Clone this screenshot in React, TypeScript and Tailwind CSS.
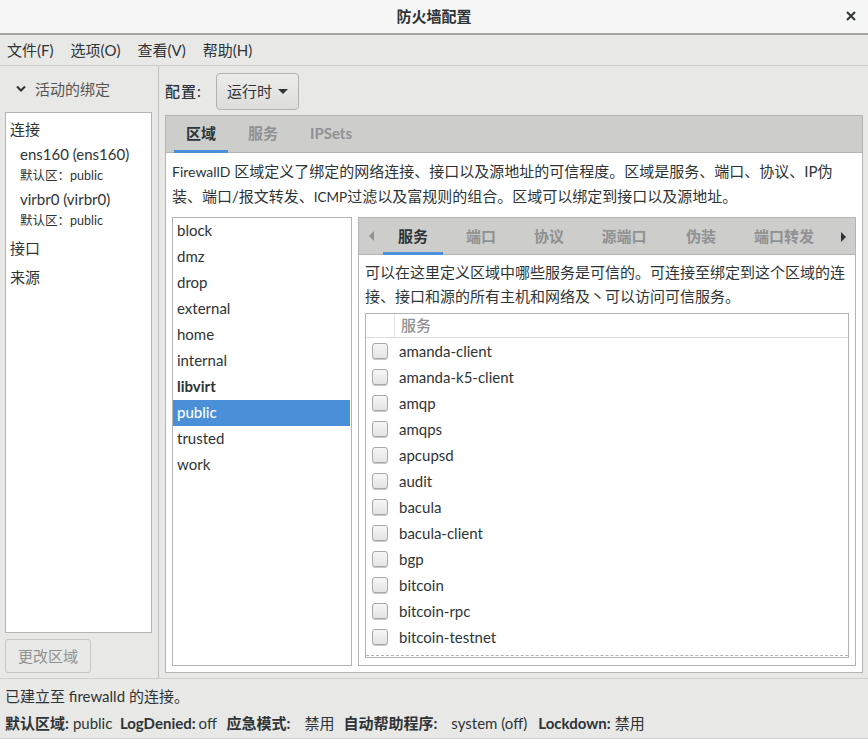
const font = { fontFamily: 'Lato,"Noto Sans CJK SC",sans-serif' };
const zones = ["block", "dmz", "drop", "external", "home", "internal", "libvirt", "public", "trusted", "work"];
const services = ["amanda-client", "amanda-k5-client", "amqp", "amqps", "apcupsd", "audit", "bacula", "bacula-client", "bgp", "bitcoin", "bitcoin-rpc", "bitcoin-testnet"];
const innerTabs = [
  ["服务", "w-[60px] ml-[8px]"],
  ["端口", "w-[60px] ml-[8px]"],
  ["协议", "w-[60px] ml-[8px]"],
  ["源端口", "w-[74px] ml-[8px]"],
  ["伪装", "w-[60px] ml-[10px]"],
  ["端口转发", "w-[88px] ml-[9px]"],
];

function Checkbox() {
  return <span className="block w-[16px] h-[16px] rounded-[3px] border border-[#a8a8a8] bg-gradient-to-b from-[#f6f6f6] to-[#e4e4e4] shadow-[0_1px_0_#c8c8c8]" />;
}

export default function App() {
  return (
    <div style={font} className="w-[868px] h-[739px] overflow-hidden flex flex-col bg-[#e8e8e7] text-[15px] text-[#2e3436]">
      <div className="h-[35px] shrink-0 relative flex items-center justify-center bg-[#f6f6f6] border-b-2 border-[#a3a3a3]">
        <span className="font-bold text-[15px]">防火墙配置</span>
        <svg className="absolute right-[12px] top-[11px]" width="10" height="10" viewBox="0 0 10 10"><path d="M1 1 L9 9 M9 1 L1 9" stroke="#2e3436" strokeWidth="2" /></svg>
      </div>
      <div className="h-[31px] shrink-0 flex items-center gap-[17px] pl-[7px] border-b border-[#cfcfcf]">
        <span>文件(F)</span><span>选项(O)</span><span>查看(V)</span><span>帮助(H)</span>
      </div>
      <div className="h-[613px] shrink-0 flex border-b border-[#d0d0d0]">
        <div className="w-[159px] shrink-0 flex flex-col pl-[5px] pr-[6px] pb-[5px] border-r border-[#c0c0c0]">
          <div className="h-[46px] shrink-0 flex items-center pl-[11px] gap-[9px] text-[#555]">
            <svg width="10" height="8" viewBox="0 0 10 8"><path d="M1 1.5 L5 5.5 L9 1.5" fill="none" stroke="#2e3436" strokeWidth="2" /></svg>
            <span>活动的绑定</span>
          </div>
          <div className="flex-1 bg-white border border-[#b4b4b4] pl-[4px] flex flex-col">
            <div className="h-[31px] flex items-center pt-[2px]">连接</div>
            <div className="pl-[10px] leading-[20px]">ens160 (ens160)</div>
            <div className="pl-[10px] leading-[20px] h-[25px] text-[12.5px] pt-[2px]">默认区：public</div>
            <div className="pl-[10px] leading-[20px]">virbr0 (virbr0)</div>
            <div className="pl-[10px] leading-[20px] h-[25px] text-[12.5px] pt-[2px]">默认区：public</div>
            <div className="h-[29px] flex items-center">接口</div>
            <div className="h-[29px] flex items-center">来源</div>
          </div>
          <div className="mt-[6px] w-[86px] h-[34px] flex items-center justify-center rounded-[3px] border border-[#c6c6c6] bg-[#e8e8e7] text-[#8f9192]">更改区域</div>
        </div>
        <div className="flex-1 flex flex-col pl-[6px] pr-[5px] pb-[5px]">
          <div className="h-[49px] shrink-0 flex items-center pt-[2px]">
            <span className="font-medium text-[#2e3436] w-[51px] tracking-[1px]">配置:</span>
            <div className="w-[83px] h-[37px] flex items-center justify-center gap-[6px] rounded-[4px] border border-[#b2b2b2] bg-gradient-to-b from-[#ececeb] to-[#dddddc]">
              <span>运行时</span>
              <svg width="10" height="6" viewBox="0 0 10 6"><path d="M0 0 H10 L5 5 Z" fill="#2e3436" /></svg>
            </div>
          </div>
          <div className="flex-1 flex flex-col border border-[#b4b4b4] bg-white min-h-0">
            <div className="h-[37px] shrink-0 flex bg-[#cdcdcc] border-b border-[#b4b4b4] font-bold">
              <div className="w-[54px] ml-[8px] flex items-center justify-center border-b-[3px] border-[#4a90d9] h-[37px] pt-[1px]">区域</div>
              <div className="w-[62px] ml-[4px] flex items-center justify-center text-[#8f9192] pb-[1px]">服务</div>
              <div className="ml-[2px] w-[70px] flex items-center justify-center text-[#8f9192] pb-[1px]">IPSets</div>
            </div>
            <div className="flex-1 flex flex-col min-h-0 px-[6px] pb-[6px]">
              <div className="h-[64px] shrink-0 pt-[6px] leading-[24px] whitespace-nowrap">
                <span className="text-[14px]">FirewallD</span> 区域定义了绑定的网络连接、接口以及源地址的可信程度。区域是服务、端口、协议、IP伪<br />
                装、端口/报文转发、<span className="text-[13.5px]">ICMP</span>过滤以及富规则的组合。区域可以绑定到接口以及源地址。
              </div>
              <div className="flex-1 flex gap-[6px] min-h-0">
                <div className="w-[180px] shrink-0 border border-[#b4b4b4]">
                  {zones.map((z) => (
                    <div key={z} className={`h-[26px] flex items-center pl-[4px] pb-[2px] mr-[1px] ${z === "libvirt" ? "font-bold" : ""} ${z === "public" ? "bg-[#4a90d9] text-white font-medium" : ""}`}>{z}</div>
                  ))}
                </div>
                <div className="flex-1 flex flex-col border border-[#b4b4b4] min-w-0">
                  <div className="h-[37px] shrink-0 flex items-center bg-[#cdcdcc] border-b border-[#b4b4b4] font-bold relative">
                    <svg className="ml-[9px] shrink-0" width="7" height="10" viewBox="0 0 7 10"><path d="M6 0 V10 L1 5 Z" fill="#8f9192" /></svg>
                    {innerTabs.map(([t, c], i) => (
                      <div key={t} className={`${c} shrink-0 h-[37px] flex items-center justify-center ${i === 0 ? "border-b-[3px] border-[#4a90d9] pt-[3px]" : "text-[#8f9192]"}`}>{t}</div>
                    ))}
                    <svg className="absolute right-[8px] top-[14px]" width="7" height="10" viewBox="0 0 7 10"><path d="M1 0 V10 L6 5 Z" fill="#2e3436" /></svg>
                  </div>
                  <div className="flex-1 flex flex-col min-h-0 px-[6px] pb-[7px]">
                    <div className="h-[58px] shrink-0 pt-[5px] leading-[24px] whitespace-nowrap">
                      可以在这里定义区域中哪些服务是可信的。可连接至绑定到这个区域的连<br />
                      接、接口和源的所有主机和网络及丶可以访问可信服务。
                    </div>
                    <div className="flex-1 min-h-0 border border-[#b4b4b4] flex flex-col overflow-hidden relative">
                      <div className="h-[24px] shrink-0 flex border-b border-[#dcdcdc] text-[#8f9192] font-medium">
                        <div className="w-[29px] border-r border-[#e4e4e4]" />
                        <div className="pl-[6px] flex items-center">服务</div>
                      </div>
                      {services.map((s) => (
                        <div key={s} className="h-[26px] shrink-0 flex items-center pl-[6px] gap-[11px]"><Checkbox /><span>{s}</span></div>
                      ))}
                      <div className="h-[26px] shrink-0 flex pl-[6px] pt-[5px]"><Checkbox /></div>
                      <div className="absolute left-0 right-0 bottom-0 h-[2px] border-t border-dashed border-[#b4b4b4] bg-white" />
                    </div>
                  </div>
                </div>
              </div>
            </div>
          </div>
        </div>
      </div>
      <div className="h-[33px] shrink-0 flex items-center pl-[5px] pt-[1px]">已建立至 firewalld 的连接。</div>
      <div className="flex-1 flex items-center pl-[5px] pb-[3px] border-b border-[#d0d0d0] whitespace-nowrap">
        <span className="font-bold">默认区域:</span><span className="ml-[4px] w-[47px]">public</span>
        <span className="font-bold">LogDenied:</span><span className="ml-[3px] w-[28px]">off</span>
        <span className="font-bold">应急模式:</span><span className="ml-[14px] w-[39px]">禁用</span>
        <span className="font-bold">自动帮助程序:</span><span className="ml-[14px] w-[87px]">system (off)</span>
        <span className="font-bold">Lockdown:</span><span className="ml-[4px]">禁用</span>
      </div>
    </div>
  );
}
